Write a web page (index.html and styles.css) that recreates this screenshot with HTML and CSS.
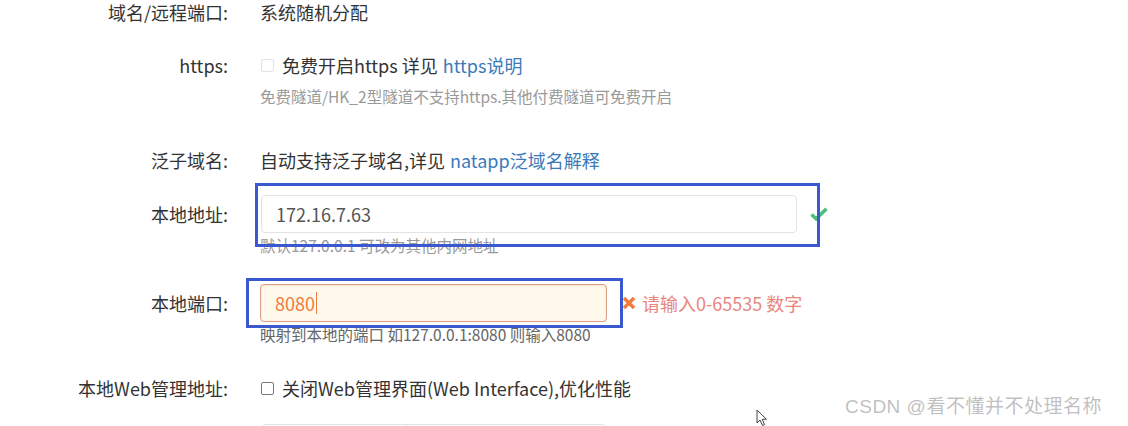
FILE: index.html
```html
<!DOCTYPE html>
<html lang="zh-CN">
<head>
<meta charset="utf-8">
<title>隧道配置</title>
<link rel="stylesheet" href="styles.css">
</head>
<body>
<form class="form">
  <div class="row r1">
    <label class="lbl">域名/远程端口:</label>
    <div class="val"><span class="txt">系统随机分配</span></div>
  </div>

  <div class="row r2">
    <label class="lbl">https:</label>
    <div class="val">
      <div class="txt"><span class="cb cb-disabled"></span>免费开启https 详见 <a class="link">https说明</a></div>
      <div class="help help-light">免费隧道/HK_2型隧道不支持https.其他付费隧道可免费开启</div>
    </div>
  </div>

  <div class="row r3">
    <label class="lbl">泛子域名:</label>
    <div class="val"><span class="txt">自动支持泛子域名,详见 <a class="link">natapp泛域名解释</a></span></div>
  </div>

  <div class="row r4">
    <label class="lbl lbl-input">本地地址:</label>
    <div class="val">
      <div class="field">
        <div class="input input-ok">172.16.7.63</div>
        <svg class="ok-icon" width="18" height="14" viewBox="0 0 18 14"><path d="M1.5 7.5 L6.2 11.8 L16.5 1.8" fill="none" stroke="#4cc07a" stroke-width="3.6" stroke-linejoin="miter"/></svg>
        <div class="mark mark1"></div>
      </div>
      <div class="help help-light help-tight">默认127.0.0.1 可改为其他内网地址</div>
    </div>
  </div>

  <div class="row r5">
    <label class="lbl lbl-input">本地端口:</label>
    <div class="val">
      <div class="field">
        <div class="input input-err">8080<span class="caret"></span></div>
        <svg class="err-icon" width="14" height="14" viewBox="0 0 14 14"><path d="M2 2 L12 12 M12 2 L2 12" fill="none" stroke="#f27a3c" stroke-width="3.4"/></svg>
        <span class="err-text">请输入0-65535 数字</span>
        <div class="mark mark2"></div>
      </div>
      <div class="help help-dark help-tight">映射到本地的端口 如127.0.0.1:8080 则输入8080</div>
    </div>
  </div>

  <div class="row r6">
    <label class="lbl">本地Web管理地址:</label>
    <div class="val"><div class="txt"><span class="cb"></span>关闭Web管理界面(Web Interface),优化性能</div></div>
  </div>

  <div class="row r7">
    <label class="lbl"></label>
    <div class="val">
      <div class="group"><div class="g-addon"></div><div class="g-input"></div></div>
    </div>
  </div>
</form>

<svg class="pointer" width="13" height="18" viewBox="0 0 13 18"><path d="M1 1 L1 14 L4 11 L6.5 16.5 L8.5 15.6 L6.2 10.3 L10.5 10.3 Z" fill="#fff" stroke="#444" stroke-width="1"/></svg>
<div class="wm">CSDN @看不懂并不处理名称</div>
</body>
</html>
```

FILE: styles.css
```css
html, body {
  margin: 0;
  padding: 0;
  background: #fff;
}
body {
  width: 1128px;
  height: 426px;
  overflow: hidden;
  position: relative;
  font-family: "Noto Sans CJK SC", "Noto Sans", sans-serif;
  font-size: 18px;
  color: #333;
}
.form {
  display: flex;
  flex-direction: column;
  height: 426px;
  overflow: hidden;
}
.row {
  display: grid;
  grid-template-columns: 228px 1fr;
  column-gap: 32px;
  align-items: start;
  flex: none;
}
.lbl {
  text-align: right;
  line-height: 24px;
  white-space: nowrap;
}
.lbl-input {
  line-height: 38px;
}
.txt {
  line-height: 24px;
  display: flex;
  align-items: center;
  white-space: nowrap;
}
.link {
  color: #3a7ab8;
  margin-left: 5px;
}
.help {
  font-size: 15.5px;
  line-height: 20px;
  margin-top: 9px;
  white-space: nowrap;
}
.help-tight { margin-top: 2px; }
.help-light { color: #999; }
.help-dark { color: #666; }

.r1 { margin-top: 0; }
.r2 { margin-top: 29px; }
.r3 { margin-top: 42px; }
.r4 { margin-top: 23px; }
.r5 { margin-top: 29px; }
.r6 { margin-top: 32px; }
.r7 { margin-top: 24px; }

.cb {
  display: inline-block;
  width: 11px;
  height: 11px;
  border: 1px solid #777;
  border-radius: 2px;
  margin: 0 8px 0 1px;
  background: #fff;
}
.cb-disabled {
  border-color: #e2e2e2;
}

.field {
  position: relative;
  display: flex;
  align-items: center;
}
.input {
  box-sizing: border-box;
  height: 38px;
  border: 1px solid #e3e3e3;
  border-radius: 4px;
  padding: 0 14px;
  line-height: 36px;
  color: #555;
  display: flex;
  align-items: center;
}
.input-ok {
  width: 536px;
  margin-left: 1px;
}
.ok-icon {
  margin-left: 13px;
}
.input-err {
  width: 347px;
  background: #fff9eb;
  border-color: #dd9b83;
  color: #ef7a3e;
  box-shadow: inset 0 1px 2px rgba(200, 80, 40, 0.12);
}
.caret {
  display: inline-block;
  width: 1px;
  height: 22px;
  background: #ef7a3e;
  margin-left: 1px;
}
.err-icon {
  margin-left: 15px;
}
.err-text {
  color: #e8867e;
  margin-left: 6px;
  white-space: nowrap;
}
.mark {
  position: absolute;
  border: 3px solid #3b58cf;
  box-sizing: border-box;
  pointer-events: none;
}
.mark1 {
  left: -5px;
  top: -12px;
  width: 565px;
  height: 64px;
}
.mark2 {
  left: -14px;
  top: -6px;
  width: 377px;
  height: 50px;
}
.group {
  display: flex;
  width: 344px;
  height: 38px;
  margin-left: 2px;
  border: 1px solid #e3e3e3;
  border-radius: 4px;
  box-sizing: border-box;
}
.g-addon {
  width: 143px;
  border-right: 1px solid #e3e3e3;
}
.g-input { flex: 1; }

.pointer {
  position: absolute;
  left: 756px;
  top: 409px;
}
.wm {
  position: absolute;
  top: 395px;
  left: 845px;
  font-family: "Liberation Sans", "Noto Sans CJK SC", sans-serif;
  font-size: 19px;
  letter-spacing: 0.5px;
  line-height: 24px;
  color: rgba(150, 150, 150, 0.6);
  white-space: nowrap;
  text-shadow: 0 0 1px #fff;
}
```
